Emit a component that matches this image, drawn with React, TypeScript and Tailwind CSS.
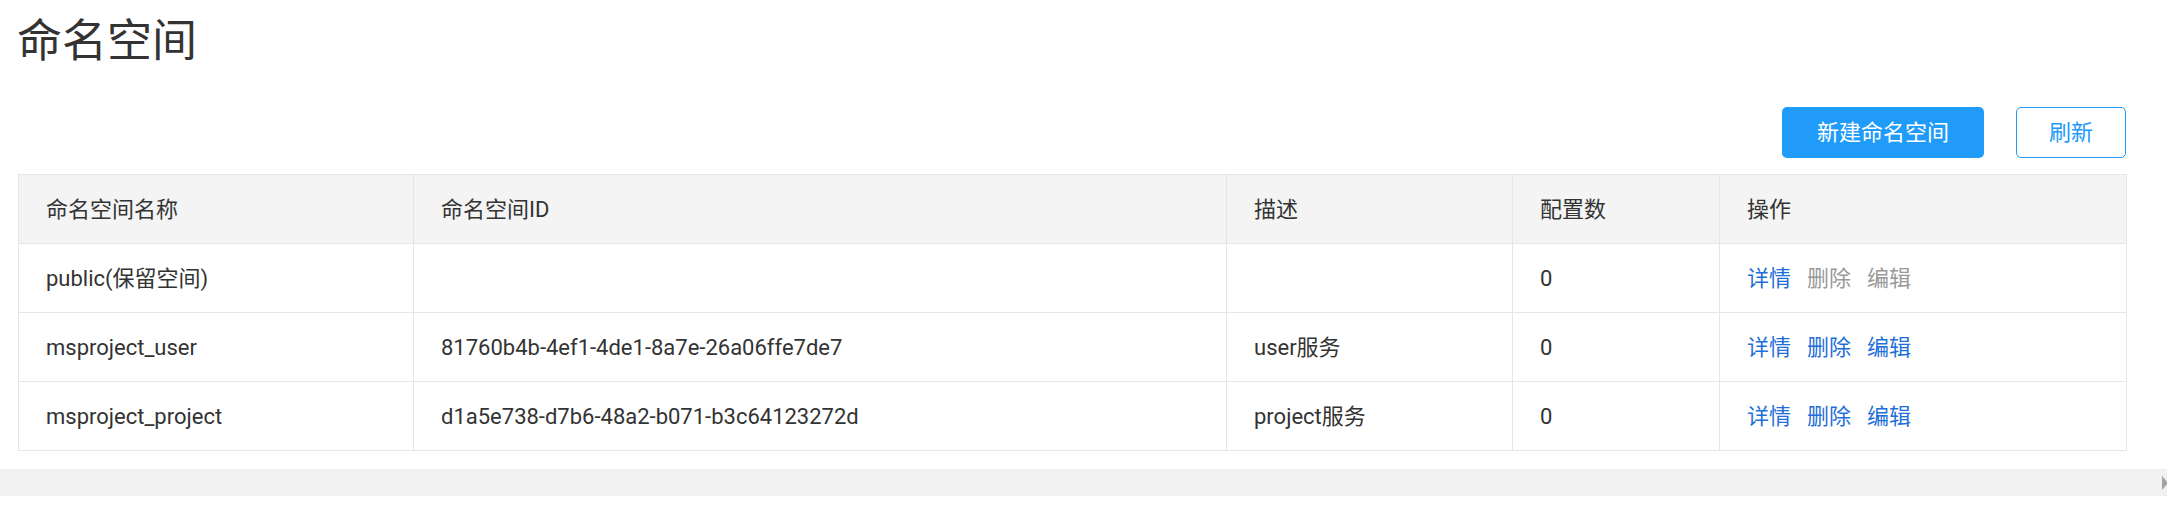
import React from "react";

// 命名空间列表页
interface NamespaceRow {
  name: string;
  id: string;
  desc: string;
  count: number;
  reserved?: boolean;
}

const rows: NamespaceRow[] = [
  { name: "public(保留空间)", id: "", desc: "", count: 0, reserved: true },
  {
    name: "msproject_user",
    id: "81760b4b-4ef1-4de1-8a7e-26a06ffe7de7",
    desc: "user服务",
    count: 0,
  },
  {
    name: "msproject_project",
    id: "d1a5e738-d7b6-48a2-b071-b3c64123272d",
    desc: "project服务",
    count: 0,
  },
];

const columns = ["命名空间名称", "命名空间ID", "描述", "配置数", "操作"];

const App: React.FC = () => {
  return (
    <div
      className="w-full h-[524px] bg-white text-[#333] overflow-hidden"
      style={{ fontFamily: 'Roboto, "Noto Sans CJK SC", sans-serif' }}
    >
      {/* Title */}
      <h1 className="ml-[17px] pt-[19px] text-[45px] leading-none font-normal text-[#333]">
        命名空间
      </h1>

      {/* Toolbar */}
      <div className="w-[2108px] ml-[18px] mt-[43px] flex justify-end gap-[32px]">
        <button className="w-[202px] h-[51px] rounded-[5px] bg-[#209bfa] text-white text-[22px]">
          新建命名空间
        </button>
        <button className="w-[110px] h-[51px] rounded-[5px] border border-[#209bfa] bg-white text-[#209bfa] text-[22px]">
          刷新
        </button>
      </div>

      {/* Table */}
      <table className="ml-[18px] mt-[16px] w-[2108px] table-fixed border-collapse text-[22px]">
        <colgroup>
          <col className="w-[395px]" />
          <col className="w-[813px]" />
          <col className="w-[286px]" />
          <col className="w-[207px]" />
          <col className="w-[407px]" />
        </colgroup>
        <thead>
          <tr className="bg-[#f4f4f4]">
            {columns.map((c) => (
              <th
                key={c}
                className="h-[69px] border border-[#e6e6e6] px-[27px] text-left font-normal"
              >
                {c}
              </th>
            ))}
          </tr>
        </thead>
        <tbody>
          {rows.map((r) => (
            <tr key={r.name}>
              <td className="h-[69px] border border-[#e6e6e6] px-[27px]">{r.name}</td>
              <td className="h-[69px] border border-[#e6e6e6] px-[27px]">{r.id}</td>
              <td className="h-[69px] border border-[#e6e6e6] px-[27px]">{r.desc}</td>
              <td className="h-[69px] border border-[#e6e6e6] px-[27px]">{r.count}</td>
              <td className="h-[69px] border border-[#e6e6e6] px-[27px]">
                <div className="flex gap-[16px]">
                  <a className="text-[#1f6fd8] cursor-pointer">详情</a>
                  <a className={r.reserved ? "text-[#999]" : "text-[#1f6fd8] cursor-pointer"}>
                    删除
                  </a>
                  <a className={r.reserved ? "text-[#999]" : "text-[#1f6fd8] cursor-pointer"}>
                    编辑
                  </a>
                </div>
              </td>
            </tr>
          ))}
        </tbody>
      </table>

      {/* Horizontal scrollbar */}
      <div className="mt-[18px] h-[27px] bg-[#f1f1f1] flex items-center justify-end">
        <div className="w-0 h-0 border-y-[7px] border-y-transparent border-l-[6px] border-l-[#a3a3a3] mr-[-1px]" />
      </div>
    </div>
  );
};

export default App;
